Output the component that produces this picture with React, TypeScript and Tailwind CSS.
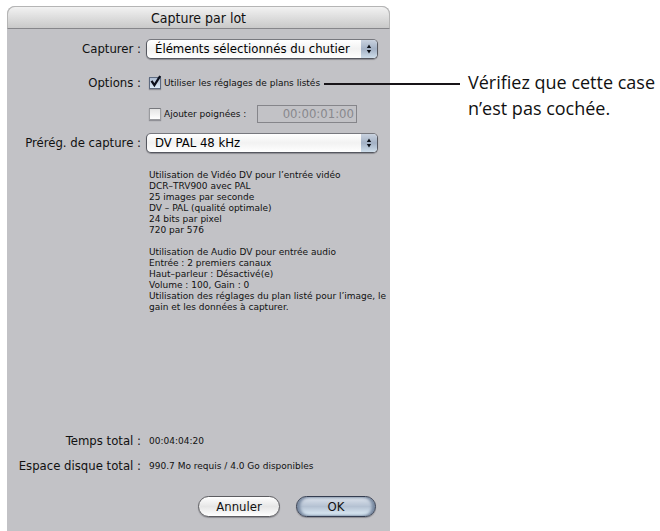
import React from "react";

const videoLines = [
  "Utilisation de Vidéo DV pour l’entrée vidéo",
  "DCR–TRV900 avec PAL",
  "25 images par seconde",
  "DV – PAL (qualité optimale)",
  "24 bits par pixel",
  "720 par 576",
];

const audioLines = [
  "Utilisation de Audio DV pour entrée audio",
  "Entrée : 2 premiers canaux",
  "Haut–parleur : Désactivé(e)",
  "Volume : 100, Gain : 0",
  "Utilisation des réglages du plan listé pour l’image, le gain et les données à capturer.",
];

const PopupMenu = ({ id, value }: { id: string; value: string }) => (
  <div className="relative mr-3 h-5">
    <select
      id={id}
      defaultValue={value}
      className="block h-5 w-full appearance-none rounded-[5px] border border-[#55575f] border-t-[#77787e] bg-linear-to-b from-white via-[#f2f2f2] to-white pl-2 text-[13px] leading-4 text-black shadow-[0_1px_1px_#8c8c92]"
    >
      <option>{value}</option>
    </select>
    <span className="pointer-events-none absolute inset-y-px right-px flex w-4 items-center justify-center rounded-r bg-linear-to-b from-[#c9d2df] via-[#a3b1c5] to-[#cfdeeb]">
      <svg width="6" height="10" viewBox="0 0 6 10" aria-hidden="true">
        <path d="M3 0.5 5.2 4H0.8zM3 9.5 0.8 6h4.4z" fill="#0c1018" />
      </svg>
    </span>
  </div>
);

const CheckBox = ({ id, checked }: { id: string; checked?: boolean }) => (
  <span className="relative block size-3 shrink-0">
    <input
      id={id}
      type="checkbox"
      defaultChecked={checked}
      className="peer block size-3 appearance-none border border-[#9a9b9f] border-t-[#77787d] bg-linear-to-b from-[#e4e4e4] to-white shadow-[0_1px_1px_#909096] checked:border-[#5d6a80] checked:from-[#aebdd3] checked:to-[#dcebf8]"
    />
    <svg
      className="pointer-events-none absolute -top-1 left-0 hidden peer-checked:block"
      width="14"
      height="16"
      viewBox="0 0 14 16"
      aria-hidden="true"
    >
      <path d="M2.5 7.8 5.4 12.2 11.2 3" fill="none" stroke="#0b0f1c" strokeWidth="2.3" />
    </svg>
  </span>
);

const App = () => (
  <main className="flex min-h-screen items-stretch bg-white pt-1.5 pl-[7px] font-['DejaVu_Sans_Condensed','DejaVu_Sans',sans-serif] text-[#111]">
    <section className="flex w-[383px] shrink-0 flex-col rounded-t-lg bg-[#c2c2c6]">
      <h1 className="h-[23px] rounded-t-lg border border-b-[#86868a] border-[#b5b5b5] bg-linear-to-b from-[#f2f2f2] to-[#c9c9c9] text-center text-sm leading-[22px]">
        Capture par lot
      </h1>

      <form className="flex flex-1 flex-col">
        <div className="grid grid-cols-[134px_1fr] items-center gap-x-[5px] pt-2.5 text-[13px]">
          <label htmlFor="source" className="text-right">Capturer :</label>
          <PopupMenu id="source" value="Éléments sélectionnés du chutier" />
        </div>

        <div className="grid grid-cols-[134px_1fr] items-center gap-x-2 pt-[15px] text-[13px] leading-[18px]">
          <span className="text-right">Options :</span>
          <div className="flex items-center gap-[3px]">
            <CheckBox id="logged" checked />
            <label htmlFor="logged" className="font-['DejaVu_Sans',sans-serif] text-[9px] leading-3">Utiliser les réglages de plans listés</label>
          </div>
        </div>

        <div className="grid grid-cols-[134px_1fr] items-center gap-x-2 pt-[13px]">
          <span />
          <div className="flex items-center gap-[3px]">
            <CheckBox id="handles" />
            <label htmlFor="handles" className="font-['DejaVu_Sans',sans-serif] text-[9px] leading-3">Ajouter poignées :</label>
            <input
              type="text"
              aria-label="Ajouter poignées"
              defaultValue="00:00:01:00"
              disabled
              className="mr-[33px] ml-auto h-[18px] w-[100px] border border-[#85858a] pr-0.5 text-right text-[13px] text-[#88888d]"
            />
          </div>
        </div>

        <div className="grid grid-cols-[134px_1fr] items-center gap-x-[5px] pt-2.5 text-[13px]">
          <label htmlFor="preset" className="text-right">Prérég. de capture :</label>
          <PopupMenu id="preset" value="DV PAL 48 kHz" />
        </div>

        <div className="flex flex-col gap-[11px] pt-[17px] pl-[142px] font-['DejaVu_Sans',sans-serif] text-[9px] leading-[11px]">
          <div>{videoLines.map((line) => <p key={line}>{line}</p>)}</div>
          <div>{audioLines.map((line) => <p key={line}>{line}</p>)}</div>
        </div>

        <dl className="mt-auto grid grid-cols-[134px_1fr] items-center gap-x-2 gap-y-[5px] text-[13px] leading-5">
          <dt className="text-right">Temps total :</dt>
          <dd className="font-['DejaVu_Sans',sans-serif] text-[9px]">00:04:04:20</dd>
          <dt className="text-right">Espace disque total :</dt>
          <dd className="font-['DejaVu_Sans',sans-serif] text-[9px]">990.7 Mo requis / 4.0 Go disponibles</dd>
        </dl>

        <div className="flex justify-end gap-4 pt-5 pr-3.5 pb-3.5 text-[13px]">
          <button type="button" className="h-[21px] w-[82px] rounded-full border border-[#5c5c60] bg-linear-to-b from-white via-[#e6e6e6] to-white leading-4 shadow-[0_1px_1px_#8c8c92]">
            Annuler
          </button>
          <button type="submit" className="h-[21px] w-20 rounded-full border border-[#343d50] bg-linear-to-b from-[#dfe5ee] via-[#b4c1d2] to-[#e2f1fb] leading-4 shadow-[inset_3px_0_3px_#7788a0,inset_-3px_0_3px_#7788a0,0_1px_1px_#8c8c92]">
            OK
          </button>
        </div>
      </form>
    </section>

    <aside className="relative flex-1 pt-[63px] pl-[78px] font-['Open_Sans','Noto_Sans',sans-serif]">
      <span className="absolute top-[77px] -left-[66px] h-0.5 w-[136px] bg-[#181418]" />
      <p className="text-lg leading-[26px] whitespace-nowrap">
        Vérifiez que cette case
        <br />
        n’est pas cochée.
      </p>
    </aside>
  </main>
);

export default App;
